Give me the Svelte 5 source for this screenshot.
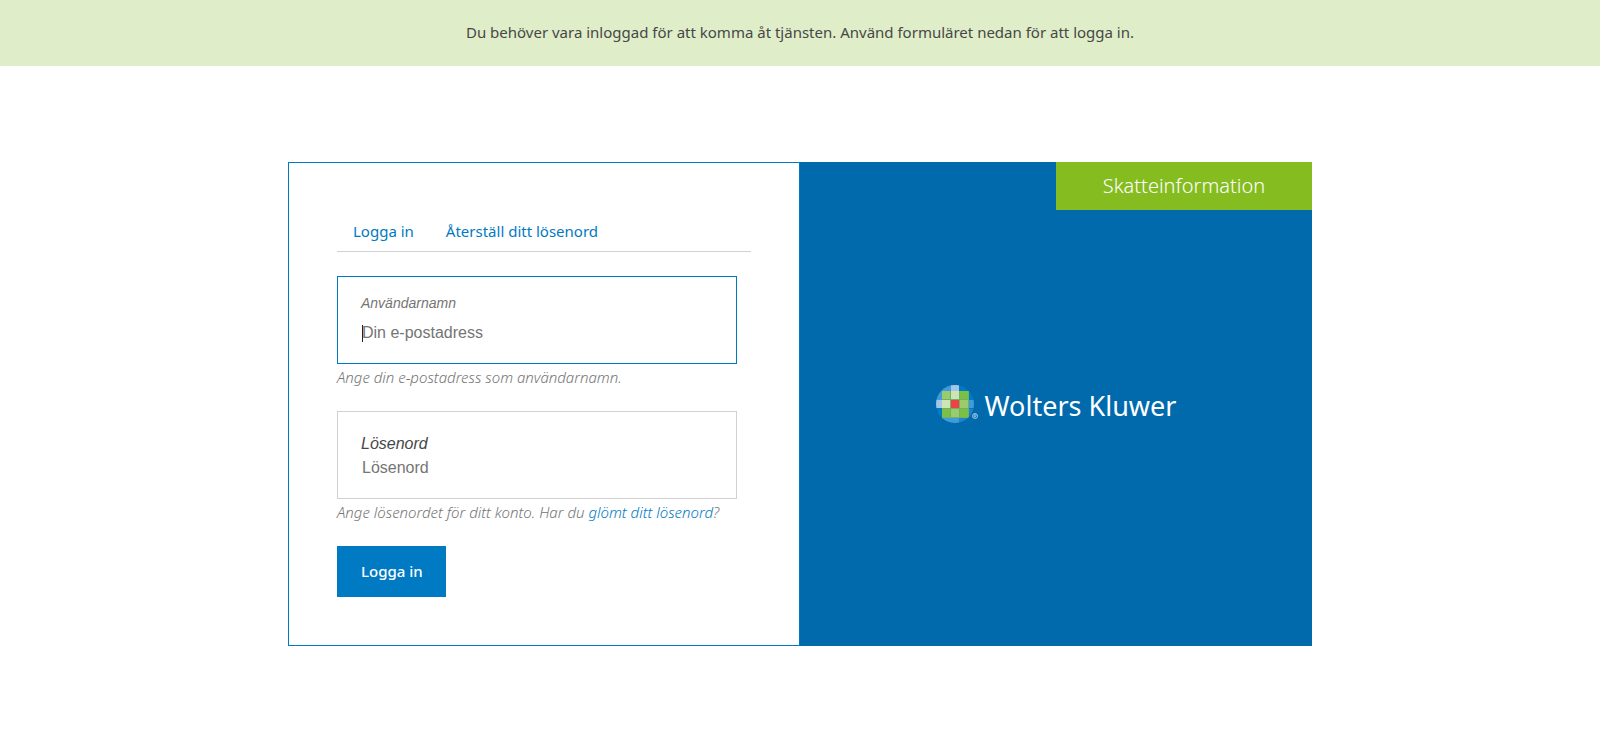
<script>
  const cells = [
    { x: 15, y: 0, w: 8, h: 6, fill: '#a5c5e6' },
    { x: 15, y: 33, w: 8, h: 6, fill: '#409bd8' },
    { x: 0, y: 15, w: 6, h: 8, fill: '#a5c5e6' },
    { x: 33, y: 15, w: 6, h: 8, fill: '#409bd8' },
    { x: 6, y: 6, w: 8, h: 8, fill: '#9bcb6b' },
    { x: 15, y: 6, w: 8, h: 8, fill: '#cde5b5' },
    { x: 24, y: 6, w: 8, h: 8, fill: '#7ac143' },
    { x: 6, y: 15, w: 8, h: 8, fill: '#cde5b5' },
    { x: 15, y: 15, w: 8, h: 8, fill: '#ef4044' },
    { x: 24, y: 15, w: 8, h: 8, fill: '#9bcb6b' },
    { x: 6, y: 24, w: 8, h: 8, fill: '#7ac143' },
    { x: 15, y: 24, w: 8, h: 8, fill: '#9bcb6b' },
    { x: 24, y: 24, w: 8, h: 8, fill: '#7ac143' }
  ];
  let username = $state('');
  let password = $state('');
</script>

<div class="notice" role="status">
  Du behöver vara inloggad för att komma åt tjänsten. Använd formuläret nedan för att logga in.
</div>

<main class="card">
  <section class="login">
    <nav class="tabs">
      <a href="#login">Logga in</a>
      <a href="#reset">Återställ ditt lösenord</a>
    </nav>
    <form onsubmit={(e) => e.preventDefault()}>
      <div class="field active">
        <label for="username">Användarnamn</label>
        <div class="entry">
          <input id="username" type="text" placeholder="Din e-postadress" bind:value={username} />
          <span class="caret"></span>
        </div>
      </div>
      <p class="help">Ange din e-postadress som användarnamn.</p>
      <div class="field">
        <label for="password">Lösenord</label>
        <div class="entry">
          <input id="password" type="password" placeholder="Lösenord" bind:value={password} />
        </div>
      </div>
      <p class="help">
        Ange lösenordet för ditt konto. Har du <a href="#reset">glömt ditt lösenord</a>?
      </p>
      <button type="submit">Logga in</button>
    </form>
  </section>

  <section class="brand">
    <div class="product">Skatteinformation</div>
    <div class="logo">
      <svg width="42" height="38" viewBox="0 0 42 38" aria-hidden="true">
        <defs>
          <clipPath id="globe"><circle cx="19" cy="19" r="19" /></clipPath>
        </defs>
        <g clip-path="url(#globe)">
          <rect width="38" height="38" fill="#007ac3" />
          <path d="M0 0H15V6H6V15H0ZM23 33H32V24H38V38H23Z" fill="#1f83c9" />
          <path d="M6 0H15V6H6ZM0 6H6V15H0ZM6 33H15V38H6Z" fill="#409bd8" />
          <rect x="6" y="6" width="27" height="27" fill="#6fb06b" />
          {#each cells as c}
            <rect x={c.x} y={c.y} width={c.w} height={c.h} fill={c.fill} />
          {/each}
        </g>
        <circle cx="39" cy="31" r="2.5" fill="none" stroke="#b8d5ea" stroke-width="0.8" />
        <path d="M38.2 32.5V29.6H39.3A.8.8 0 0 1 39.3 31.2H38.2M39.2 31.2L40 32.5" fill="none" stroke="#d5e6f3" stroke-width="0.6" />
      </svg>
      <span>Wolters Kluwer</span>
    </div>
  </section>
</main>

<style>
  :global(body) {
    margin: 0;
    background: #fff;
    color: #474747;
    font-family: 'Noto Sans', 'Open Sans', sans-serif;
    font-size: 15px;
  }
  .notice {
    padding: 20px 24px 22px;
    background: #dfeec8;
    line-height: 24px;
    text-align: center;
  }
  .card {
    display: grid;
    grid-template-columns: 1fr 1fr;
    width: 64%;
    min-width: 900px;
    margin: 96px auto;
  }
  .login {
    padding: 48px;
    border: 1px solid #007ac3;
  }
  .tabs {
    display: flex;
    margin-bottom: 24px;
    border-bottom: 1px solid #d1d1d1;
  }
  .tabs a {
    padding: 8px 16px;
    line-height: 24px;
    color: #007ac3;
    text-decoration: none;
  }
  form {
    display: flex;
    flex-direction: column;
    align-items: flex-start;
  }
  .field {
    display: flex;
    flex-direction: column;
    box-sizing: border-box;
    width: 100%;
    max-width: 400px;
    min-height: 88px;
    padding: 20px 23px 16px;
    border: 1px solid #d1d1d1;
    font-family: 'Liberation Sans', Arial, sans-serif;
    font-size: 16px;
  }
  .field label {
    line-height: 24px;
    font-style: italic;
  }
  .field.active {
    gap: 8px;
    padding: 16px 23px;
    border-color: #007ac3;
  }
  .field.active label {
    font-size: 14px;
    line-height: 20px;
    color: #757575;
  }
  .entry {
    position: relative;
    display: flex;
  }
  input {
    flex: 1;
    min-width: 0;
    height: 24px;
    padding: 0 1px;
    border: 0;
    outline: 0;
    background: transparent;
    font: inherit;
    color: #474747;
  }
  input::placeholder {
    color: #757575;
    opacity: 1;
  }
  .caret {
    position: absolute;
    top: 4px;
    left: 1px;
    width: 1px;
    height: 17px;
    background: #232323;
  }
  .help {
    margin: 0;
    padding: 1px 0 22px;
    font-size: 15px;
    font-style: italic;
    font-weight: 300;
    line-height: 24px;
    color: #757575;
  }
  .help a {
    color: #007ac3;
    text-decoration: none;
  }
  button {
    padding: 12px 23px 12px 24px;
    border: 0;
    background: #007ac3;
    color: #fff;
    font: inherit;
    font-weight: 500;
    line-height: 27px;
  }
  .brand {
    position: relative;
    display: flex;
    align-items: center;
    justify-content: center;
    background: #006aad;
  }
  .product {
    position: absolute;
    top: 0;
    right: 0;
    width: 50%;
    font-size: 20px;
    font-weight: 300;
    line-height: 48px;
    text-align: center;
    color: #fff;
    background: #85bc20;
  }
  .logo {
    display: flex;
    align-items: center;
    gap: 7px;
    font-size: 27px;
    line-height: 38px;
    color: #fff;
  }
  .logo span {
    padding-top: 4px;
  }
</style>
